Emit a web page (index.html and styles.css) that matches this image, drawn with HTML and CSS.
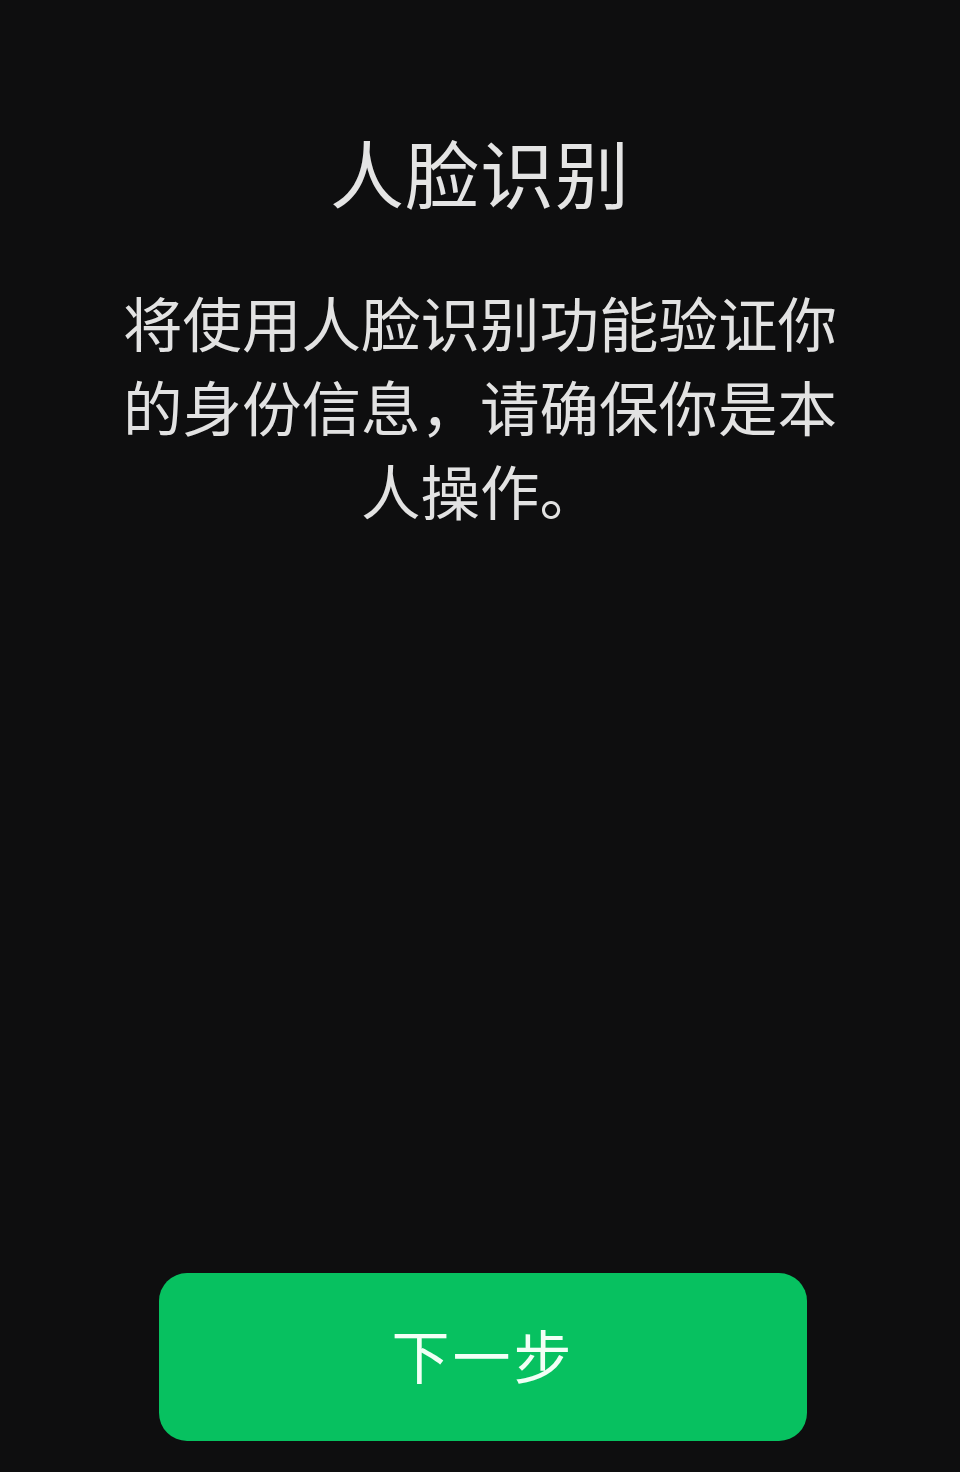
FILE: index.html
```html
<!DOCTYPE html>
<html lang="zh-CN">
<head>
    <meta charset="UTF-8">
    <meta name="viewport" content="width=device-width, initial-scale=1.0">
    <title>人脸识别</title>
    <link rel="stylesheet" href="styles.css">
</head>
<body>
    <div class="page">
        <h1 class="title">人脸识别</h1>
        <p class="desc">将使用人脸识别功能验证你的身份信息，请确保你是本人操作。</p>

        <!-- 下一步 -->
        <button class="next-btn">下一步</button>
    </div>
</body>
</html>
```

FILE: styles.css
```css
html, body {
    margin: 0;
    padding: 0;
    background-color: #0e0e0f;
}
body {
    font-family: "Noto Sans CJK SC", "Noto Sans", sans-serif;
    color: #e2e2e2;
}
.page {
    display: flex;
    flex-direction: column;
    align-items: center;
    min-height: 1472px;
    box-sizing: border-box;
    padding: 123px 120px 31px;
}
.title {
    margin: 0;
    font-size: 74px;
    font-weight: normal;
    line-height: 96px;
    letter-spacing: 1px;
    color: #e4e4e4;
}
.desc {
    margin: 60px 0 0;
    width: 722px;
    font-size: 59.5px;
    line-height: 84px;
    text-align: center;
    color: #e2e2e2;
}
.next-btn {
    margin-top: auto;
    margin-left: 6px;
    width: 648px;
    height: 168px;
    padding-top: 0;
    padding-bottom: 6px;
    border: none;
    border-radius: 28px;
    background-color: #07c160;
    color: #f2fff6;
    font-family: "Noto Sans CJK SC", "Noto Sans", sans-serif;
    font-size: 58px;
    letter-spacing: 3px;
    cursor: pointer;
}
```
